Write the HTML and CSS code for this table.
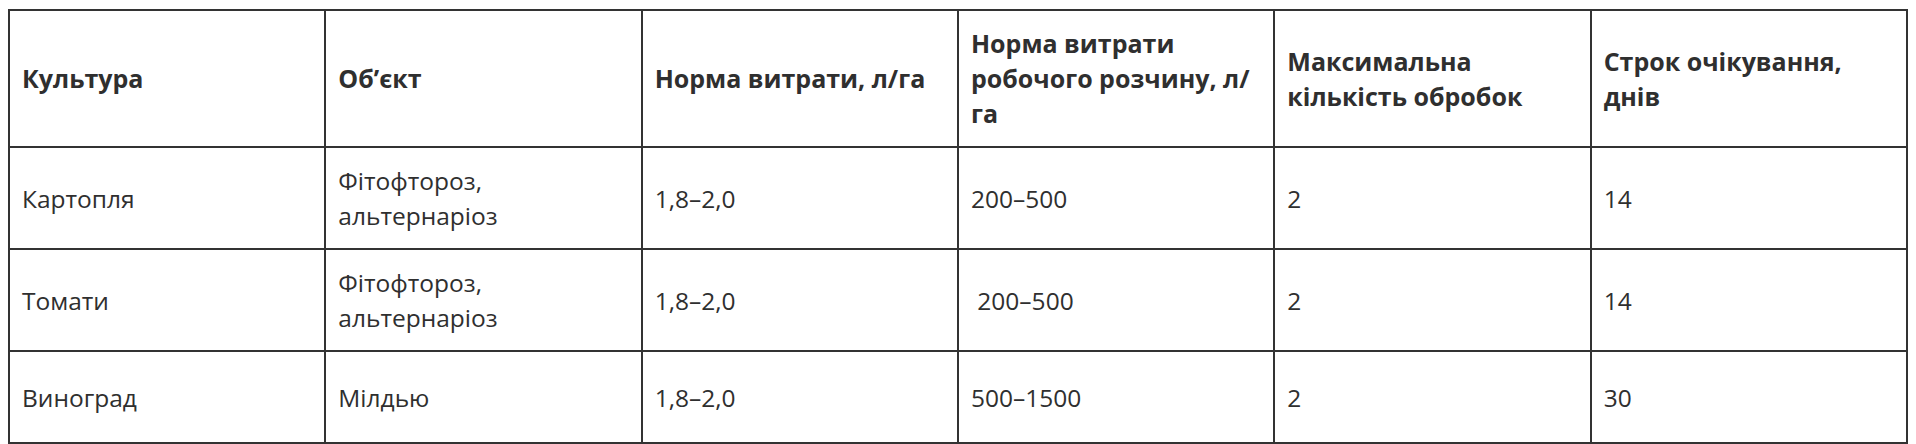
FILE: index.html
```html
<!DOCTYPE html>
<html lang="uk">
<head>
<meta charset="utf-8">
<title>Регламент застосування</title>
<link rel="stylesheet" href="styles.css">
</head>
<body>
<table class="reg-table">
  <colgroup>
    <col class="col"><col class="col"><col class="col"><col class="col"><col class="col"><col class="col">
  </colgroup>
  <thead>
    <tr>
      <th>Культура</th>
      <th>Об’єкт</th>
      <th>Норма витрати, л/га</th>
      <th>Норма витрати робочого розчину, л/<wbr>га</th>
      <th>Максимальна кількість обробок</th>
      <th>Строк очікування,<br>днів</th>
    </tr>
  </thead>
  <tbody>
    <tr>
      <td>Картопля</td>
      <td>Фітофтороз, альтернаріоз</td>
      <td>1,8–2,0</td>
      <td>200–500</td>
      <td>2</td>
      <td>14</td>
    </tr>
    <tr>
      <td>Томати</td>
      <td>Фітофтороз, альтернаріоз</td>
      <td>1,8–2,0</td>
      <td>&nbsp;200–500</td>
      <td>2</td>
      <td>14</td>
    </tr>
    <tr>
      <td>Виноград</td>
      <td>Мілдью</td>
      <td>1,8–2,0</td>
      <td>500–1500</td>
      <td>2</td>
      <td>30</td>
    </tr>
  </tbody>
</table>
</body>
</html>
```
FILE: styles.css
```css
html, body {
  background: #ffffff;
}
body {
  margin: 8px;
  padding-top: 1px;
  font-family: "Open Sans", "Noto Sans", "Liberation Sans", sans-serif;
  color: #2f2f2f;
}
.reg-table {
  width: 100%;
  border-collapse: collapse;
  table-layout: fixed;
  font-size: 24.5px;
  line-height: 35px;
}
.reg-table .col {
  width: 16.666%;
}
.reg-table th,
.reg-table td {
  border: 2px solid #333333;
  padding: 15px 12px;
  text-align: left;
  vertical-align: middle;
}
.reg-table th {
  font-weight: 700;
  font-size: 25px;
}
.reg-table td {
  font-weight: 400;
  height: 60px;
}
```
